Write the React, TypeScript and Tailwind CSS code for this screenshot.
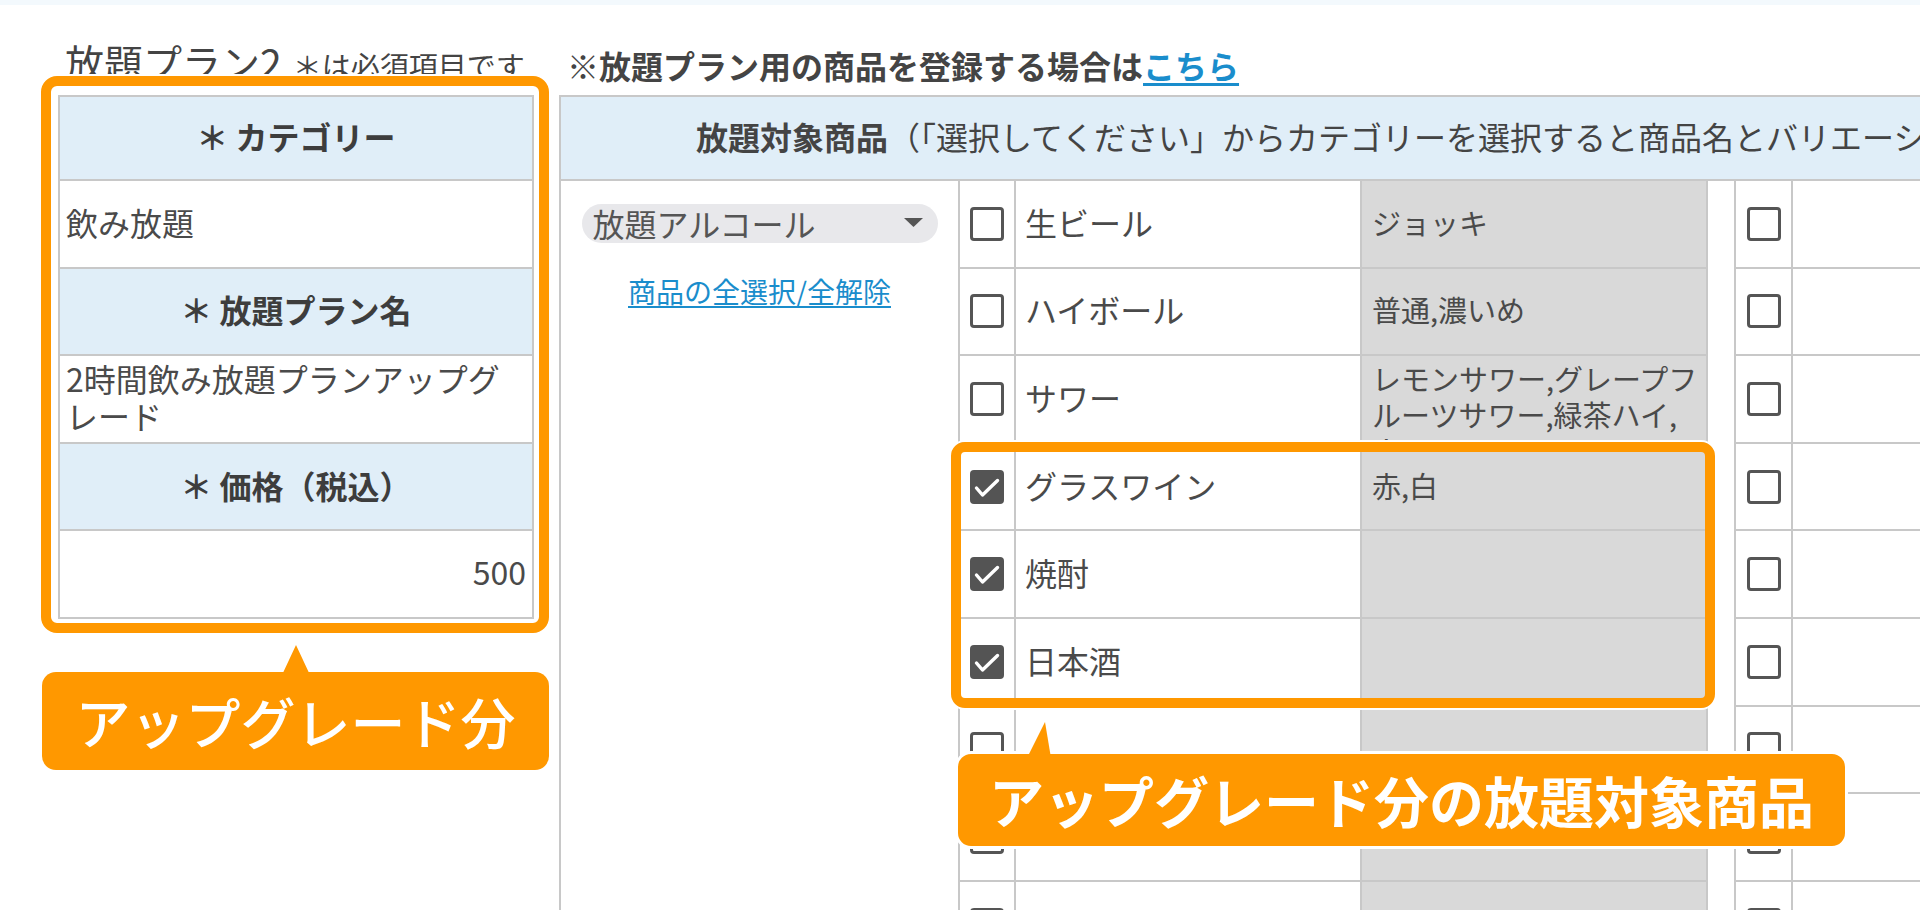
import React from "react";

const border = "border-[#c8c8c8]";

type Product = { name: string; variation: string; checked: boolean; overflow?: boolean };

const products: Product[] = [
  { name: "生ビール", variation: "ジョッキ", checked: false },
  { name: "ハイボール", variation: "普通,濃いめ", checked: false },
  { name: "サワー", variation: "レモンサワー,グレープフルーツサワー,緑茶ハイ,ウーロンハイ", checked: false, overflow: true },
  { name: "グラスワイン", variation: "赤,白", checked: true },
  { name: "焼酎", variation: "", checked: true },
  { name: "日本酒", variation: "", checked: true },
  { name: "", variation: "", checked: false },
  { name: "", variation: "", checked: false },
  { name: "", variation: "", checked: false },
];

function Checkbox({ checked }: { checked: boolean }) {
  if (checked) {
    return (
      <svg width="34" height="34" viewBox="0 0 34 34" className="shrink-0">
        <rect x="0" y="0" width="34" height="34" rx="4" fill="#545454" />
        <polyline points="6.5,18 12.5,25 27.5,10.5" fill="none" stroke="#fff" strokeWidth="3.4" strokeLinecap="round" strokeLinejoin="round" />
      </svg>
    );
  }
  return <div className="h-[34px] w-[34px] shrink-0 rounded-[4px] border-[3.5px] border-[#555] bg-white" />;
}

function LeftTable() {
  const header = `flex items-center justify-center pb-[4px] bg-[#e0eef8] font-bold text-[32px] text-[#3d3d3d] border-b-2 ${border}`;
  const cell = `flex items-center px-[6px] text-[32px] text-[#4a4a4a] bg-white`;
  return (
    <div className={`w-[476px] shrink-0 border-2 ${border}`}>
      <div className={`h-[84px] ${header}`}>＊ カテゴリー</div>
      <div className={`h-[87.6px] border-b-2 ${border} ${cell} pb-[4px]`}>飲み放題</div>
      <div className={`h-[87.6px] ${header}`}>＊ 放題プラン名</div>
      <div className={`h-[87.6px] border-b-2 ${border} ${cell} pb-[4px] leading-[37px]`}>2時間飲み放題プランアップグレード</div>
      <div className={`h-[87.6px] ${header}`}>＊ 価格（税込）</div>
      <div className={`h-[85.6px] ${cell} justify-end pb-[7px]`}>500</div>
    </div>
  );
}

function ProductTable({ rows, wide }: { rows: Product[]; wide: boolean }) {
  return (
    <div className={`border-l-2 ${border} ${wide ? "w-[750px]" : "flex-1"}`}>
      {rows.map((p, i) => (
        <div key={i} className={`flex h-[87.6px] border-b-2 ${border}`}>
          <div className={`flex items-center justify-center border-r-2 ${border} ${wide ? "w-[56px]" : "w-[57px]"}`}>
            <Checkbox checked={wide ? p.checked : false} />
          </div>
          {wide ? (
            <>
              <div className={`flex w-[346px] items-center border-r-2 ${border} pb-[4px] pl-[9px] text-[32px] text-[#4a4a4a]`}>{p.name}</div>
              <div
                className={`flex w-[346px] overflow-hidden border-r-2 ${border} bg-[#d9d9d9] pl-[10px] pr-[4px] text-[29px] leading-[36px] text-[#4a4a4a] ${
                  p.overflow ? "items-start pt-[4px]" : "items-center pb-[4px]"
                }`}
              >
                <span>{p.variation}</span>
              </div>
            </>
          ) : (
            <div className="flex-1" />
          )}
        </div>
      ))}
    </div>
  );
}

export default function App() {
  return (
    <div className="relative h-[910px] w-[1920px] overflow-hidden bg-white font-['Noto_Sans_CJK_JP','Noto_Sans',sans-serif] text-[#444]">
      <div className="h-[5px] bg-[#f3f9fd]" />

      <div className="flex h-[90px] items-end pb-[14px] pl-[58px]">
        <div className="flex w-[501px] items-baseline pl-[7px] leading-none">
          <span className="text-[39px] text-[#444]">放題プラン2</span>
          <span className="ml-[11px] text-[29px] text-[#444]">＊は必須項目です</span>
        </div>
        <div className="pl-[8px] text-[32px] font-bold leading-none text-[#444]">
          ※放題プラン用の商品を登録する場合は
          <a className="text-[#1a8dcc] underline underline-offset-4">こちら</a>
        </div>
      </div>

      <div className="flex items-start pl-[58px]">
        <LeftTable />
        <div className={`ml-[25px] flex-1 border-l-2 border-t-2 ${border}`}>
          <div className={`flex h-[84px] items-center whitespace-nowrap border-b-2 ${border} bg-[#e0eef8] pb-[4px] pl-[135px] text-[32px] text-[#444]`}>
            <span className="font-bold">放題対象商品</span>
            <span>（「選択してください」からカテゴリーを選択すると商品名とバリエーションが表示されます）</span>
          </div>
          <div className="flex">
            <div className="flex w-[397px] shrink-0 flex-col items-center pt-[23px]">
              <div className="flex h-[39px] w-[356px] items-center justify-between rounded-full bg-[#e8e8eb] pb-[2px] pl-[11px] pr-[15px] text-[32px] leading-none text-[#555]">
                <span>放題アルコール</span>
                <svg width="19" height="9" viewBox="0 0 19 9">
                  <polygon points="0,0 19,0 9.5,9" fill="#555" />
                </svg>
              </div>
              <a className="mt-[34px] text-[28px] leading-none text-[#1a8dcc] underline underline-offset-[3px]">商品の全選択/全解除</a>
            </div>
            <ProductTable rows={products} wide />
            <div className="w-[26px] shrink-0" />
            <ProductTable rows={products} wide={false} />
          </div>
        </div>
      </div>

      {/* annotation overlays */}
      <div className="absolute left-[41px] top-[76px] h-[557px] w-[508px] rounded-[16px] border-[10px] border-[#ff9800] shadow-[0_0_0_2px_#fff]" />
      <div className="absolute left-[951px] top-[442px] h-[266px] w-[764px] rounded-[14px] border-[10px] border-[#ff9800] shadow-[0_0_0_2px_#fff]" />

      <div className="absolute left-[42px] top-[672px] flex h-[98px] w-[507px] items-center justify-center rounded-[14px] bg-[#ff9800] pb-[2px] text-[55px] font-medium leading-none text-white">
        アップグレード分
      </div>
      <svg className="absolute left-[280px] top-[644px]" width="32" height="32" viewBox="0 0 32 32">
        <polygon points="16,1 2,31 30,31" fill="#ff9800" />
      </svg>

      <div className="absolute left-[955px] top-[751px] flex h-[98px] w-[893px] items-center justify-center rounded-[16px] border-[3px] border-white bg-[#ff9800] pb-[2px] text-[55px] font-bold leading-none text-white">
        アップグレード分の放題対象商品
      </div>
      <svg className="absolute left-[1025px] top-[720px]" width="30" height="40" viewBox="0 0 30 40">
        <polygon points="20,2 2,38 26,38" fill="#ff9800" />
      </svg>
    </div>
  );
}
